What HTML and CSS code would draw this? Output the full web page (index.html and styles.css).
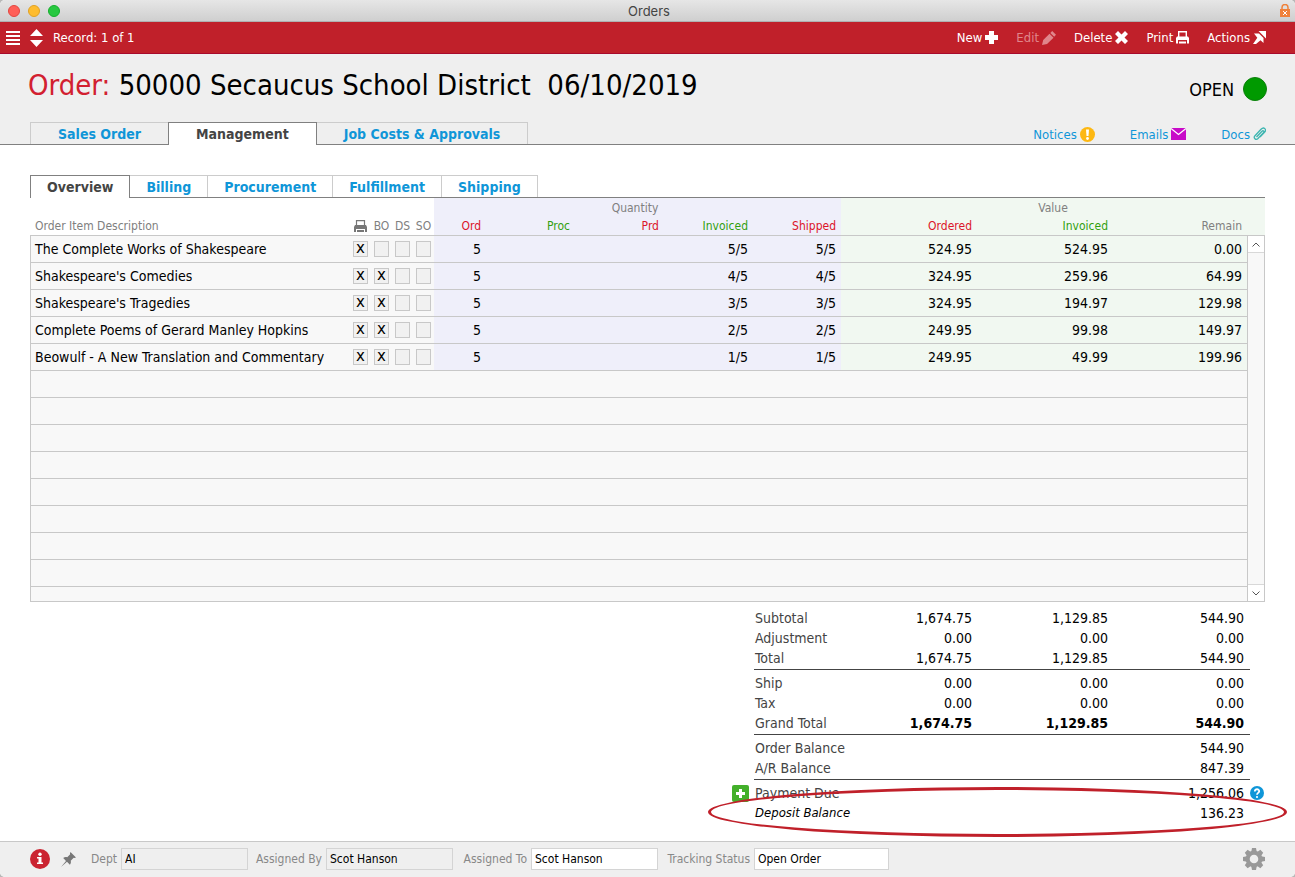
FILE: index.html
```
<!DOCTYPE html>
<html lang="en">
<head>
    <meta charset="UTF-8">
    <meta name="viewport" content="width=device-width, initial-scale=1.0">
    <title>Orders</title>
    <link rel="stylesheet" href="styles.css">
</head>
<body>
    <div class="window">
        <div class="titlebar">
            <div class="lights">
                <span class="light red"></span>
                <span class="light yellow"></span>
                <span class="light green"></span>
            </div>
            <span class="window-title">Orders</span>
            <svg class="lock" width="10" height="13" viewBox="0 0 10 13"><path d="M2 6V3.500a3 3 0 0 1 6 0V6" fill="none" stroke="#f0813a" stroke-width="1.500"/><rect x="0" y="5" width="10" height="8" fill="#f0813a"/><path d="M3 7l4 4M7 7l-4 4" stroke="#fff" stroke-width="1"/></svg>
        </div>

        <div class="toolbar">
            <button class="tool" aria-label="Menu"><svg width="14" height="14" viewBox="0 0 14 14"><path d="M0 1h14M0 5h14M0 9h14M0 13h14" stroke="#fff" stroke-width="2"/></svg></button>
            <button class="tool" aria-label="Change record"><svg width="13" height="18" viewBox="0 0 13 18"><path d="M6.500 0L13 7H0zM6.500 18l6.500-7H0z" fill="#fff"/></svg></button>
            <span class="record">Record: 1 of 1</span>
            <div class="actions">
                <button class="tool">New <svg width="13" height="13" viewBox="0 0 13 13"><path d="M4 0h5v4h4v5H9v4H4V9H0V4h4z" fill="#fff"/></svg></button>
                <button class="tool" disabled>Edit <svg width="14" height="14" viewBox="0 0 14 14"><path d="M0 14l1.200-5L7.500 2.700l4 4L5 13zM8.300 1.900L10.200 0 14 3.800l-1.800 2z" fill="#e0868b"/></svg></button>
                <button class="tool">Delete <svg width="13" height="13" viewBox="0 0 13 13"><path d="M3 0l3.500 3.500L10 0l3 3-3.500 3.500L13 10l-3 3-3.500-3.500L3 13l-3-3 3.500-3.500L0 3z" fill="#fff"/></svg></button>
                <button class="tool">Print <svg width="13" height="13" viewBox="0 0 13 13"><path d="M2.700 6V.7h7.600V6" fill="none" stroke="#fff" stroke-width="1.400"/><path d="M0 7l1-1.500h11L13 7v5.500h-2V9H2v3.500H0z" fill="#fff"/><path d="M3 11.500h7" stroke="#fff" stroke-width="2"/></svg></button>
                <button class="tool">Actions <svg width="13" height="13" viewBox="0 0 13 13"><path d="M5.500 0H13v7.500z" fill="#fff"/><path d="M1 2.500h5l4.500 4.500v5L7.500 9.200 3 13H0l4.300-6.300z" fill="#fff"/></svg></button>
            </div>
        </div>

        <header class="header">
            <div class="heading">
                <h1><span class="heading-label">Order:</span> 50000 Secaucus School District&nbsp; 06/10/2019</h1>
                <div class="status">OPEN <span class="status-dot"></span></div>
            </div>
            <div class="header-nav">
                <nav class="tabs main-tabs">
                    <a class="tab" href="#">Sales Order</a>
                    <a class="tab active" href="#">Management</a>
                    <a class="tab" href="#">Job Costs &amp; Approvals</a>
                </nav>
                <div class="links">
                    <a href="#">Notices <svg width="15" height="15" viewBox="0 0 15 15"><circle cx="7.500" cy="7.500" r="7.500" fill="#fdb813"/><path d="M6 2.500h3L8.500 9h-2z" fill="#fff"/><circle cx="7.500" cy="11.500" r="1.400" fill="#fff"/></svg></a>
                    <a href="#">Emails <svg width="15" height="12" viewBox="0 0 15 12"><path d="M0 0h15v12H0z" fill="#c80ac8"/><path d="M0 .5l7.500 6 7.500-6" fill="none" stroke="#fff" stroke-width="1.300"/></svg></a>
                    <a href="#">Docs <svg width="13" height="14" viewBox="0 0 13 14"><path d="M3.500 10L9 4.200c1.200-1.200 2.600.2 1.500 1.400L5 11.500c-2.200 2.200-5-.6-3-2.800l6-6.400c3-3 6 .2 3.500 3L7 10" fill="none" stroke="#3db5b0" stroke-width="1.300"/></svg></a>
                </div>
            </div>
        </header>

        <main class="content">
            <nav class="tabs sub-tabs">
                <a class="tab active" href="#">Overview</a>
                <a class="tab" href="#">Billing</a>
                <a class="tab" href="#">Procurement</a>
                <a class="tab" href="#">Fulfillment</a>
                <a class="tab" href="#">Shipping</a>
            </nav>

            <div class="portal">
                <table class="items">
                    <colgroup>
                        <col>
                        <col class="col-flag" span="4">
                        <col class="col-ord">
                        <col class="col-qty" span="3">
                        <col class="col-shipped">
                        <col class="col-value" span="2">
                        <col class="col-remain">
                    </colgroup>
                    <thead>
                        <tr class="groups">
                            <td colspan="5"></td>
                            <th class="qty" colspan="5">Quantity</th>
                            <th class="value value-group" colspan="3">Value</th>
                        </tr>
                        <tr class="names">
                            <th class="desc">Order Item Description</th>
                            <th class="flag"><svg width="13" height="12" viewBox="0 0 13 12"><path d="M2.500 6V.7h8V6" fill="none" stroke="#777" stroke-width="1.200"/><path d="M0 7l1-2h11l1 2v5h-2V9H2v3H0z" fill="#777"/><path d="M3 11h7" stroke="#777" stroke-width="2"/></svg></th>
                            <th class="flag">BO</th>
                            <th class="flag">DS</th>
                            <th class="flag">SO</th>
                            <th class="qty red-text">Ord</th>
                            <th class="qty green-text">Proc</th>
                            <th class="qty red-text">Prd</th>
                            <th class="qty green-text">Invoiced</th>
                            <th class="qty red-text">Shipped</th>
                            <th class="value red-text">Ordered</th>
                            <th class="value green-text">Invoiced</th>
                            <th class="value">Remain</th>
                        </tr>
                    </thead>
                    <tbody>
                        <tr>
                            <td class="desc">The Complete Works of Shakespeare</td>
                            <td class="flag"><input type="checkbox" aria-label="Print" checked></td>
                            <td class="flag"><input type="checkbox" aria-label="BO"></td>
                            <td class="flag"><input type="checkbox" aria-label="DS"></td>
                            <td class="flag"><input type="checkbox" aria-label="SO"></td>
                            <td class="qty">5</td><td class="qty"></td><td class="qty"></td><td class="qty">5/5</td><td class="qty">5/5</td>
                            <td class="value">524.95</td><td class="value">524.95</td><td class="value">0.00</td>
                        </tr>
                        <tr>
                            <td class="desc">Shakespeare's Comedies</td>
                            <td class="flag"><input type="checkbox" aria-label="Print" checked></td>
                            <td class="flag"><input type="checkbox" aria-label="BO" checked></td>
                            <td class="flag"><input type="checkbox" aria-label="DS"></td>
                            <td class="flag"><input type="checkbox" aria-label="SO"></td>
                            <td class="qty">5</td><td class="qty"></td><td class="qty"></td><td class="qty">4/5</td><td class="qty">4/5</td>
                            <td class="value">324.95</td><td class="value">259.96</td><td class="value">64.99</td>
                        </tr>
                        <tr>
                            <td class="desc">Shakespeare's Tragedies</td>
                            <td class="flag"><input type="checkbox" aria-label="Print" checked></td>
                            <td class="flag"><input type="checkbox" aria-label="BO" checked></td>
                            <td class="flag"><input type="checkbox" aria-label="DS"></td>
                            <td class="flag"><input type="checkbox" aria-label="SO"></td>
                            <td class="qty">5</td><td class="qty"></td><td class="qty"></td><td class="qty">3/5</td><td class="qty">3/5</td>
                            <td class="value">324.95</td><td class="value">194.97</td><td class="value">129.98</td>
                        </tr>
                        <tr>
                            <td class="desc">Complete Poems of Gerard Manley Hopkins</td>
                            <td class="flag"><input type="checkbox" aria-label="Print" checked></td>
                            <td class="flag"><input type="checkbox" aria-label="BO" checked></td>
                            <td class="flag"><input type="checkbox" aria-label="DS"></td>
                            <td class="flag"><input type="checkbox" aria-label="SO"></td>
                            <td class="qty">5</td><td class="qty"></td><td class="qty"></td><td class="qty">2/5</td><td class="qty">2/5</td>
                            <td class="value">249.95</td><td class="value">99.98</td><td class="value">149.97</td>
                        </tr>
                        <tr>
                            <td class="desc">Beowulf - A New Translation and Commentary</td>
                            <td class="flag"><input type="checkbox" aria-label="Print" checked></td>
                            <td class="flag"><input type="checkbox" aria-label="BO" checked></td>
                            <td class="flag"><input type="checkbox" aria-label="DS"></td>
                            <td class="flag"><input type="checkbox" aria-label="SO"></td>
                            <td class="qty">5</td><td class="qty"></td><td class="qty"></td><td class="qty">1/5</td><td class="qty">1/5</td>
                            <td class="value">249.95</td><td class="value">49.99</td><td class="value">199.96</td>
                        </tr>
                        <tr class="empty"><td colspan="13"></td></tr>
                        <tr class="empty"><td colspan="13"></td></tr>
                        <tr class="empty"><td colspan="13"></td></tr>
                        <tr class="empty"><td colspan="13"></td></tr>
                        <tr class="empty"><td colspan="13"></td></tr>
                        <tr class="empty"><td colspan="13"></td></tr>
                        <tr class="empty"><td colspan="13"></td></tr>
                        <tr class="empty"><td colspan="13"></td></tr>
                        <tr class="empty last"><td colspan="13"></td></tr>
                    </tbody>
                </table>
                <div class="scroll">
                    <div class="scroll-head"></div>
                    <div class="scroll-track">
                        <button class="scroll-btn" aria-label="Scroll up"><svg width="8" height="5" viewBox="0 0 8 5"><path d="M.5 4.500L4 1l3.500 3.500" fill="none" stroke="#555"/></svg></button>
                        <button class="scroll-btn" aria-label="Scroll down"><svg width="8" height="5" viewBox="0 0 8 5"><path d="M.5.5L4 4 7.500.5" fill="none" stroke="#555"/></svg></button>
                    </div>
                </div>
            </div>

            <div class="summary">
                <table class="totals">
                    <colgroup>
                        <col class="col-side">
                        <col class="col-label">
                        <col class="col-value">
                        <col class="col-value">
                        <col class="col-value">
                        <col class="col-side">
                    </colgroup>
                    <tbody>
                        <tr><td></td><th>Subtotal</th><td>1,674.75</td><td>1,129.85</td><td>544.90</td><td></td></tr>
                        <tr><td></td><th>Adjustment</th><td>0.00</td><td>0.00</td><td>0.00</td><td></td></tr>
                        <tr><td></td><th>Total</th><td>1,674.75</td><td>1,129.85</td><td>544.90</td><td></td></tr>
                    </tbody>
                    <tbody>
                        <tr><td></td><th>Ship</th><td>0.00</td><td>0.00</td><td>0.00</td><td></td></tr>
                        <tr><td></td><th>Tax</th><td>0.00</td><td>0.00</td><td>0.00</td><td></td></tr>
                        <tr class="grand"><td></td><th>Grand Total</th><td>1,674.75</td><td>1,129.85</td><td>544.90</td><td></td></tr>
                    </tbody>
                    <tbody>
                        <tr><td></td><th>Order Balance</th><td></td><td></td><td>544.90</td><td></td></tr>
                        <tr><td></td><th>A/R Balance</th><td></td><td></td><td>847.39</td><td></td></tr>
                    </tbody>
                    <tbody>
                        <tr>
                            <td class="side"><button class="icon-btn" aria-label="Add payment"><svg width="17" height="17" viewBox="0 0 17 17"><rect width="17" height="17" rx="2" fill="#43b02a"/><path d="M8.500 4v9M4 8.500h9" stroke="#fff" stroke-width="3"/></svg></button></td>
                            <th>Payment Due</th><td></td><td></td><td>1,256.06</td>
                            <td class="side"><button class="icon-btn" aria-label="Help"><svg width="14" height="14" viewBox="0 0 14 14"><circle cx="7" cy="7" r="7" fill="#0f96d8"/><path d="M4.800 5.400c0-3 4.600-2.700 4.400 0C9.100 6.900 7 6.900 7 8.700" fill="none" stroke="#fff" stroke-width="1.800"/><circle cx="7" cy="11" r="1.100" fill="#fff"/></svg></button></td>
                        </tr>
                        <tr class="deposit"><td></td><th>Deposit Balance</th><td></td><td></td><td>136.23</td><td></td></tr>
                    </tbody>
                </table>
                <div class="callout"></div>
            </div>
        </main>

        <footer class="footer">
            <button class="icon-btn" aria-label="Information"><svg width="20" height="20" viewBox="0 0 20 20"><circle cx="10" cy="10" r="10" fill="#cb2431"/><circle cx="10" cy="5.300" r="1.700" fill="#fff"/><path d="M7 8h4.500v5.500H13V15H7v-1.500h1.500v-4H7z" fill="#fff"/></svg></button>
            <button class="icon-btn" aria-label="Pin"><svg width="15" height="15" viewBox="0 0 15 15"><path d="M9.500 0L15 5.500l-1.500.6-.8-.3-3 3c.5 1.500.2 2.800-.8 3.900L6 9.800 0 15l5-6.100L2.200 6.100c1.200-1 2.500-1.300 4-.8l3-3L8.900 1.500z" fill="#777"/></svg></button>
            <form class="fields">
                <label for="dept">Dept</label>
                <input type="text" id="dept" value="AI" readonly>
                <label for="assignedBy">Assigned By</label>
                <input type="text" id="assignedBy" value="Scot Hanson" readonly>
                <label for="assignedTo">Assigned To</label>
                <input type="text" id="assignedTo" value="Scot Hanson">
                <label for="tracking">Tracking Status</label>
                <input type="text" id="tracking" value="Open Order">
            </form>
            <button class="icon-btn settings" aria-label="Settings"><svg width="22" height="22" viewBox="-11 -11 22 22"><g fill="#999"><path d="M-2-11h4l1 5h-6zM-2 11h4l1-5h-6z"/><path d="M-2-11h4l1 5h-6zM-2 11h4l1-5h-6z" transform="rotate(45)"/><path d="M-2-11h4l1 5h-6zM-2 11h4l1-5h-6z" transform="rotate(90)"/><path d="M-2-11h4l1 5h-6zM-2 11h4l1-5h-6z" transform="rotate(135)"/></g><circle r="6.300" fill="#efefef" stroke="#999" stroke-width="4"/></svg></button>
        </footer>
    </div>
</body>
</html>
```
FILE: styles.css
```
* {
    box-sizing: border-box;
}

body {
    margin: 0;
    background-color: #b8b8b8;
    font-family: "DejaVu Sans Condensed", "Noto Sans", sans-serif;
    font-size: 14px;
    color: #000;
}

a {
    text-decoration: none;
}

button {
    border: none;
    background: none;
    padding: 0;
    font: inherit;
    color: inherit;
    cursor: pointer;
}

svg {
    display: block;
    flex-shrink: 0;
}

.window {
    display: flex;
    flex-direction: column;
    min-height: 100vh;
    background-color: #fff;
    border-radius: 5px;
    overflow: hidden;
}

/* title bar */
.titlebar {
    display: grid;
    grid-template-columns: 1fr auto 1fr;
    align-items: center;
    height: 22px;
    padding: 0 5px 0 8px;
    background: linear-gradient(#e6e6e6, #cfcfcf);
    border-bottom: 1px solid #b0b0b0;
}

.lights {
    display: flex;
    gap: 8px;
}

.light {
    width: 12px;
    height: 12px;
    border-radius: 50%;
}

.light.red {
    background-color: #ff5f57;
    border: 1px solid #e2463f;
}

.light.yellow {
    background-color: #febc2e;
    border: 1px solid #e0a123;
}

.light.green {
    background-color: #28c840;
    border: 1px solid #14ae2b;
}

.window-title {
    font-family: Inter, "Liberation Sans", sans-serif;
    font-size: 13px;
    color: #444;
}

.lock {
    justify-self: end;
}

/* toolbar */
.toolbar {
    display: flex;
    align-items: center;
    gap: 10px;
    height: 32px;
    padding: 0 29px 0 6px;
    background-color: #c0202a;
    border-bottom: 1px solid #a80a2c;
    color: #fff;
    font-size: 13px;
}

.tool {
    display: flex;
    align-items: center;
    gap: 3px;
}

.tool:disabled {
    color: #e0868b;
    cursor: default;
}

.actions {
    display: flex;
    gap: 18px;
    margin-left: auto;
}

/* order header */
.header {
    background-color: #efefef;
    border-bottom: 1px solid #808080;
}

.heading {
    display: flex;
    justify-content: space-between;
    align-items: center;
    height: 68px;
    padding: 0 28px;
}

.heading h1 {
    margin: 0;
    padding-bottom: 6px;
    font-size: 29px;
    font-weight: normal;
}

.heading-label {
    color: #d22030;
}

.status {
    display: flex;
    align-items: center;
    gap: 9px;
    padding-top: 2px;
    font-size: 18px;
}

.status-dot {
    width: 24px;
    height: 24px;
    border-radius: 50%;
    border: 1px solid #0b800b;
    background-color: #009a00;
}

.header-nav {
    display: flex;
    justify-content: space-between;
    padding: 0 29px 0 30px;
}

.links {
    display: flex;
    align-items: center;
    gap: 35px;
    padding-top: 2px;
}

.links a {
    display: flex;
    align-items: center;
    gap: 3px;
    font-size: 13px;
    color: #0f96d8;
}

/* tabs */
.tabs {
    display: flex;
}

.tab {
    border: 1px solid #ccc;
    border-left-width: 0;
    border-bottom: none;
    height: 22px;
    line-height: 22px;
    font-weight: bold;
    color: #0f96d8;
}

.tab:first-child {
    border-left-width: 1px;
}

.tab.active {
    height: 23px;
    margin-bottom: -1px;
    border-color: #808080;
    border-left: 1px solid #808080;
    background-color: #fff;
    color: #444;
}

.tab:has(+ .active) {
    border-right: none;
}

.main-tabs .tab {
    padding: 0 27px;
}

.sub-tabs {
    border-bottom: 1px solid #808080;
}

.sub-tabs .tab {
    padding: 0 16px;
}

/* item list */
.content {
    flex: 1;
    padding: 30px 30px 0;
}

.portal {
    display: flex;
}

table {
    border-collapse: separate;
    border-spacing: 0;
    table-layout: fixed;
}

.items {
    flex: 1;
    width: 100%;
}

.col-flag {
    width: 21px;
}

.col-ord {
    width: 52px;
}

.col-qty {
    width: 89px;
}

.col-shipped {
    width: 88px;
}

.col-value {
    width: 136px;
}

.col-remain {
    width: 134px;
}

.items th,
.items td {
    padding: 0 5px 0 0;
    text-align: right;
    font-weight: normal;
    line-height: 18px;
}

.items th {
    font-size: 12px;
    color: #808080;
}

.items .groups th {
    height: 19px;
    text-align: center;
}

.items .value-group {
    padding-left: 23px;
}

.items .names th {
    height: 19px;
    border-bottom: 1px solid #c8c8c8;
}

.items tbody td {
    height: 27px;
    background-color: #f8f8f8;
    border-bottom: 1px solid #c8c8c8;
}

.items tbody td:first-child {
    border-left: 1px solid #c8c8c8;
}

.items .desc {
    padding-left: 4px;
    text-align: left;
    white-space: nowrap;
}

.items .names .desc {
    padding-left: 5px;
}

.items .flag {
    padding: 0;
    text-align: center;
}

.items .flag svg,
.items .flag input {
    display: block;
    margin: 0 auto;
}

.items .qty,
.items tbody .qty {
    background-color: #efeffa;
}

.items .value,
.items tbody .value {
    background-color: #f1f8f1;
}

.items .red-text {
    color: #dc1428;
}

.items .green-text {
    color: #32a010;
}

.items .last td {
    height: 15px;
}

.flag input {
    appearance: none;
    width: 15px;
    height: 16px;
    border: 1px solid #c8c8c8;
    background-color: #f1f1f1;
}

.flag input:checked::before {
    content: "x";
    display: block;
    font: 15px/12px "DejaVu Sans", sans-serif;
    text-align: center;
}

.scroll {
    display: flex;
    flex-direction: column;
    width: 18px;
}

.scroll-head {
    height: 38px;
    background-color: #f1f8f1;
    border-bottom: 1px solid #c8c8c8;
}

.scroll-track {
    flex: 1;
    display: flex;
    flex-direction: column;
    justify-content: space-between;
    background-color: #f8f8f8;
    border: 1px solid #c8c8c8;
    border-top: none;
}

.scroll-btn {
    display: flex;
    align-items: center;
    justify-content: center;
    height: 17px;
    background-color: #fff;
    border-bottom: 1px solid #d8d8d8;
}

.scroll-btn:last-child {
    border-bottom: none;
    border-top: 1px solid #d8d8d8;
}

/* totals */
.summary {
    position: relative;
    width: 579px;
    margin: 6px -22px 0 auto;
    padding-left: 24px;
}

.totals {
    width: 540px;
}

.totals .col-side {
    width: 22px;
}

.totals .col-label {
    width: 88px;
}

.totals th,
.totals td {
    height: 20px;
    padding: 0 6px 0 0;
    line-height: 20px;
    text-align: right;
}

.totals th {
    padding: 0 0 0 1px;
    text-align: left;
    font-weight: normal;
    color: #444;
    white-space: nowrap;
}

.totals tbody + tbody tr:first-child > * {
    height: 23px;
    padding-top: 3px;
}

.totals tbody:not(:last-child) tr:last-child > * {
    height: 22px;
    padding-bottom: 1px;
}

.totals tbody:not(:last-child) tr:last-child > :not(:first-child):not(:last-child) {
    border-bottom: 1px solid #444;
}

.totals .grand td {
    font-weight: bold;
}

.totals .deposit th {
    font-size: 13px;
    font-style: italic;
    color: #000;
}

.totals .side {
    padding-right: 0;
}

.icon-btn {
    display: block;
}

.callout {
    position: absolute;
    left: 0;
    right: 0;
    bottom: -14px;
    height: 50px;
    border: 3px solid #c0202a;
    border-radius: 50%;
    pointer-events: none;
}

/* status bar */
.footer {
    display: flex;
    align-items: center;
    gap: 11px;
    height: 36px;
    padding: 0 30px 1px;
    background-color: #efefef;
    border-top: 1px solid #c8c8c8;
    font-size: 12px;
}

.fields {
    display: grid;
    grid-template-columns: 34px 127px 78px 127px 78px 127px 96px 135px;
    align-items: center;
}

.fields label {
    padding-right: 4px;
    text-align: right;
    color: #888;
}

.fields input {
    width: 100%;
    height: 22px;
    padding: 0 3px;
    border: 1px solid #d4d4d4;
    background-color: #fff;
    font: inherit;
    color: #000;
}

.fields input:read-only {
    background-color: #efefef;
}

.settings {
    margin-left: auto;
}
```
